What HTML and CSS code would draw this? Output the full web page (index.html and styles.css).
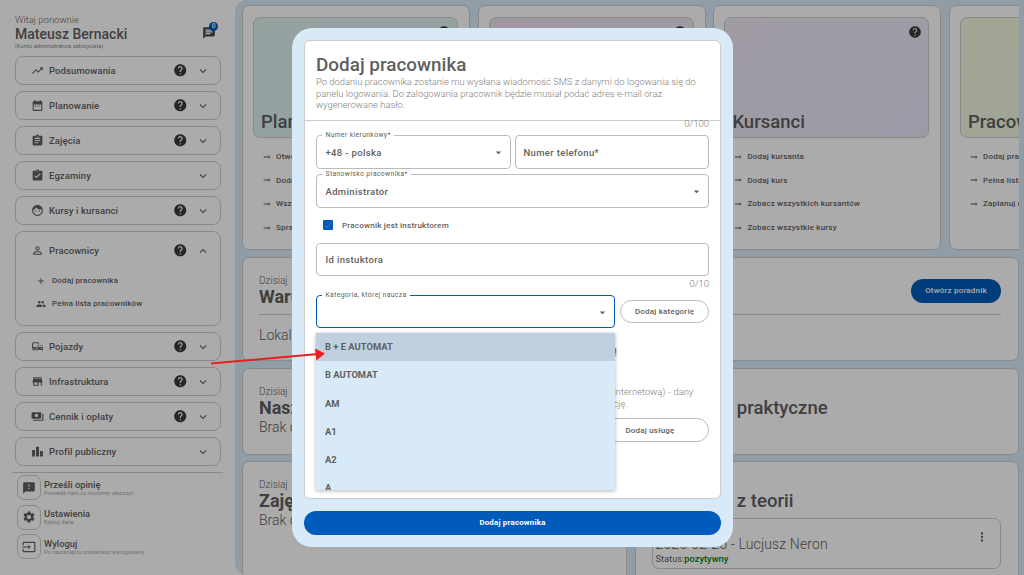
FILE: index.html
```html
<!DOCTYPE html>
<html lang="pl">
<head>
  <meta charset="UTF-8">
  <meta name="viewport" content="width=device-width, initial-scale=1.0">
  <title>Dodaj pracownika</title>
  <link rel="stylesheet" href="styles.css">
</head>
<body>
  <!-- ikony -->
  <svg class="icon-defs" aria-hidden="true">
    <symbol id="i-trend" viewBox="0 0 24 24"><path d="M16 6l2.29 2.29-4.88 4.88-4-4L2 16.59 3.41 18l6-6 4 4 6.3-6.29L22 12V6z"/></symbol>
    <symbol id="i-date" viewBox="0 0 24 24"><path d="M19 4h-1V2h-2v2H8V2H6v2H5c-1.11 0-1.99.9-1.99 2L3 20a2 2 0 0 0 2 2h14c1.1 0 2-.9 2-2V6c0-1.1-.9-2-2-2zm0 16H5V10h14v10zM9 14H7v-2h2v2zm4 0h-2v-2h2v2zm4 0h-2v-2h2v2z"/></symbol>
    <symbol id="i-assign" viewBox="0 0 24 24"><path d="M19 3h-4.18C14.4 1.84 13.3 1 12 1c-1.3 0-2.4.84-2.82 2H5c-1.1 0-2 .9-2 2v14c0 1.1.9 2 2 2h14c1.1 0 2-.9 2-2V5c0-1.1-.9-2-2-2zm-7 0c.55 0 1 .45 1 1s-.45 1-1 1-1-.45-1-1 .45-1 1-1zm2 14H7v-2h7v2zm3-4H7v-2h10v2zm0-4H7V7h10v2z"/></symbol>
    <symbol id="i-check" viewBox="0 0 24 24"><path d="M19 3h-4.18C14.4 1.84 13.3 1 12 1c-1.3 0-2.4.84-2.82 2H5c-1.1 0-2 .9-2 2v14c0 1.1.9 2 2 2h14c1.1 0 2-.9 2-2V5c0-1.1-.9-2-2-2zm-7 0c.55 0 1 .45 1 1s-.45 1-1 1-1-.45-1-1 .45-1 1-1zm-2 14l-4-4 1.41-1.41L10 14.17l6.59-6.59L18 9l-8 8z"/></symbol>
    <symbol id="i-face" viewBox="0 0 24 24"><path d="M9 11.75c-.69 0-1.25.56-1.25 1.25s.56 1.25 1.25 1.25 1.25-.56 1.25-1.25-.56-1.25-1.25-1.25zm6 0c-.69 0-1.25.56-1.25 1.25s.56 1.25 1.25 1.25 1.25-.56 1.25-1.25-.56-1.25-1.25-1.25zM12 2C6.48 2 2 6.48 2 12s4.48 10 10 10 10-4.48 10-10S17.52 2 12 2zm0 18c-4.41 0-8-3.59-8-8 0-.29.02-.58.05-.86 2.36-1.05 4.23-2.98 5.21-5.37C11.07 8.33 14.05 10 17.42 10c.78 0 1.53-.09 2.25-.26.21.71.33 1.47.33 2.26 0 4.41-3.59 8-8 8z"/></symbol>
    <symbol id="i-person" viewBox="0 0 24 24"><path d="M12 5.9c1.16 0 2.1.94 2.1 2.1s-.94 2.1-2.1 2.1S9.9 9.16 9.9 8s.94-2.1 2.1-2.1m0 9c2.97 0 6.1 1.46 6.1 2.1v1.1H5.9V17c0-.64 3.13-2.1 6.1-2.1M12 4C9.79 4 8 5.79 8 8s1.79 4 4 4 4-1.79 4-4-1.79-4-4-4zm0 9c-2.67 0-8 1.34-8 4v3h16v-3c0-2.66-5.33-4-8-4z"/></symbol>
    <symbol id="i-help" viewBox="0 0 24 24"><path d="M12 2C6.48 2 2 6.48 2 12s4.48 10 10 10 10-4.48 10-10S17.52 2 12 2zm1 17h-2v-2h2v2zm2.07-7.75l-.9.92C13.45 12.9 13 13.5 13 15h-2v-.5c0-1.1.45-2.1 1.17-2.83l1.24-1.26c.37-.36.59-.86.59-1.41 0-1.1-.9-2-2-2s-2 .9-2 2H8c0-2.21 1.79-4 4-4s4 1.79 4 4c0 .88-.36 1.68-.93 2.25z"/></symbol>
    <symbol id="i-more" viewBox="0 0 24 24"><path d="M16.59 8.59L12 13.17 7.41 8.59 6 10l6 6 6-6z"/></symbol>
    <symbol id="i-less" viewBox="0 0 24 24"><path d="M12 8l-6 6 1.41 1.41L12 10.83l4.59 4.58L18 14z"/></symbol>
    <symbol id="i-add" viewBox="0 0 24 24"><path d="M19 13h-6v6h-2v-6H5v-2h6V5h2v6h6v2z"/></symbol>
    <symbol id="i-people" viewBox="0 0 24 24"><path d="M16 11c1.66 0 2.99-1.34 2.99-3S17.66 5 16 5c-1.66 0-3 1.34-3 3s1.34 3 3 3zm-8 0c1.66 0 2.99-1.34 2.99-3S9.66 5 8 5C6.34 5 5 6.34 5 8s1.34 3 3 3zm0 2c-2.33 0-7 1.17-7 3.5V19h14v-2.5c0-2.33-4.67-3.5-7-3.5zm8 0c-.29 0-.62.02-.97.05 1.16.84 1.97 1.97 1.97 3.45V19h6v-2.5c0-2.33-4.67-3.5-7-3.5z"/></symbol>
    <symbol id="i-commute" viewBox="0 0 24 24"><path d="M12 4H5C3.34 4 2 5.34 2 7v8c0 1.66 1.34 3 3 3l-1 1v1h1l2-2.03L9 18v-5H4V5.98L13 6v2h2V7c0-1.66-1.34-3-3-3zM5 14c.55 0 1 .45 1 1s-.45 1-1 1-1-.45-1-1 .45-1 1-1zm15.57-4.34c-.14-.4-.52-.66-.97-.66h-7.19c-.46 0-.83.26-.98.66L10 13.77l.01 5.51c0 .38.31.72.69.72h.62c.38 0 .68-.38.68-.76V18h8v1.24c0 .38.31.76.69.76h.61c.38 0 .69-.34.69-.72l.01-1.37v-4.14l-1.43-4.11zm-8.16.34h7.19l1.03 3h-9.25l1.03-3zM12 16c-.55 0-1-.45-1-1s.45-1 1-1 1 .45 1 1-.45 1-1 1zm8 0c-.55 0-1-.45-1-1s.45-1 1-1 1 .45 1 1-.45 1-1 1z"/></symbol>
    <symbol id="i-store" viewBox="0 0 24 24"><path d="M20 4H4v2h16V4zm1 10v-2l-1-5H4l-1 5v2h1v6h10v-6h4v6h2v-6h1zm-9 4H6v-4h6v4z"/></symbol>
    <symbol id="i-pay" viewBox="0 0 24 24"><path d="M19 14V6c0-1.1-.9-2-2-2H3c-1.1 0-2 .9-2 2v8c0 1.1.9 2 2 2h14c1.1 0 2-.9 2-2zm-9-1c-1.66 0-3-1.34-3-3s1.34-3 3-3 3 1.34 3 3-1.34 3-3 3zm13-6v11c0 1.1-.9 2-2 2H4v-2h17V7h2z"/></symbol>
    <symbol id="i-bars" viewBox="0 0 24 24"><path d="M7.5 21H2V9h5.5v12zm7.25-18h-5.5v18h5.5V3zM22 11h-5.5v10H22V11z"/></symbol>
    <symbol id="i-feedback" viewBox="0 0 24 24"><path d="M20 2H4c-1.1 0-1.99.9-1.99 2L2 22l4-4h14c1.1 0 2-.9 2-2V4c0-1.1-.9-2-2-2zm-7 12h-2v-2h2v2zm0-4h-2V6h2v4z"/></symbol>
    <symbol id="i-settings" viewBox="0 0 24 24"><path d="M19.14 12.94c.04-.3.06-.61.06-.94 0-.32-.02-.64-.07-.94l2.03-1.58c.18-.14.23-.41.12-.61l-1.92-3.32c-.12-.22-.37-.29-.59-.22l-2.39.96c-.5-.38-1.03-.7-1.62-.94l-.36-2.54c-.04-.24-.24-.41-.48-.41h-3.84c-.24 0-.43.17-.47.41l-.36 2.54c-.59.24-1.13.57-1.62.94l-2.39-.96c-.22-.08-.47 0-.59.22L2.74 8.87c-.12.21-.08.47.12.61l2.03 1.58c-.05.3-.09.63-.09.94s.02.64.07.94l-2.03 1.58c-.18.14-.23.41-.12.61l1.92 3.32c.12.22.37.29.59.22l2.39-.96c.5.38 1.03.7 1.62.94l.36 2.54c.05.24.24.41.48.41h3.84c.24 0 .44-.17.47-.41l.36-2.54c.59-.24 1.13-.56 1.62-.94l2.39.96c.22.08.47 0 .59-.22l1.92-3.32c.12-.22.07-.47-.12-.61l-2.01-1.58zM12 15.6c-1.98 0-3.6-1.62-3.6-3.6s1.62-3.6 3.6-3.6 3.6 1.62 3.6 3.6-1.62 3.6-3.6 3.6z"/></symbol>
    <symbol id="i-input" viewBox="0 0 24 24"><path d="M21 3.01H3c-1.1 0-2 .9-2 2V9h2V4.99h18v14.03H3V15H1v4.01c0 1.1.9 1.98 2 1.98h18c1.1 0 2-.88 2-1.98v-14c0-1.11-.9-2-2-2zM11 16l4-4-4-4v3H1v2h10v3z"/></symbol>
    <symbol id="i-chat" viewBox="0 0 24 24"><path d="M20 2H4c-1.1 0-2 .9-2 2v18l4-4h14c1.1 0 2-.9 2-2V4c0-1.1-.9-2-2-2zM6 9h12v2H6V9zm8 5H6v-2h8v2zm4-6H6V6h12v2z"/></symbol>
    <symbol id="i-arrow" viewBox="0 0 24 24"><path d="M16.01 11H4v2h12.01v3L20 12l-3.99-4z"/></symbol>
    <symbol id="i-dots" viewBox="0 0 24 24"><path d="M12 8c1.1 0 2-.9 2-2s-.9-2-2-2-2 .9-2 2 .9 2 2 2zm0 2c-1.1 0-2 .9-2 2s.9 2 2 2 2-.9 2-2-.9-2-2-2zm0 6c-1.1 0-2 .9-2 2s.9 2 2 2 2-.9 2-2-.9-2-2-2z"/></symbol>
    <symbol id="i-drop" viewBox="0 0 24 24"><path d="M7 10l5 5 5-5z"/></symbol>
    <symbol id="i-tick" viewBox="0 0 24 24"><path d="M9 16.17L4.83 12l-1.42 1.41L9 19 21 7l-1.41-1.41z"/></symbol>
  </svg>

  <div class="layout">
    <!-- menu boczne -->
    <aside class="sidebar">
      <div class="user">
        <div>
          <div class="user-hello">Witaj ponownie</div>
          <div class="user-name">Mateusz Bernacki</div>
          <div class="user-role">(Konto administratora założyciela)</div>
        </div>
        <div class="user-chat">
          <svg class="icon-chat"><use href="#i-chat"/></svg>
          <span class="badge">0</span>
        </div>
      </div>

      <nav class="nav">
        <div class="nav-item"><svg class="nav-icon"><use href="#i-trend"/></svg><span class="nav-label">Podsumowania</span><svg class="nav-help"><use href="#i-help"/></svg><svg class="nav-chevron"><use href="#i-more"/></svg></div>
        <div class="nav-item"><svg class="nav-icon"><use href="#i-date"/></svg><span class="nav-label">Planowanie</span><svg class="nav-help"><use href="#i-help"/></svg><svg class="nav-chevron"><use href="#i-more"/></svg></div>
        <div class="nav-item"><svg class="nav-icon"><use href="#i-assign"/></svg><span class="nav-label">Zajęcia</span><svg class="nav-help"><use href="#i-help"/></svg><svg class="nav-chevron"><use href="#i-more"/></svg></div>
        <div class="nav-item"><svg class="nav-icon"><use href="#i-check"/></svg><span class="nav-label">Egzaminy</span><svg class="nav-chevron"><use href="#i-more"/></svg></div>
        <div class="nav-item"><svg class="nav-icon"><use href="#i-face"/></svg><span class="nav-label">Kursy i kursanci</span><svg class="nav-help"><use href="#i-help"/></svg><svg class="nav-chevron"><use href="#i-more"/></svg></div>
        <div class="nav-group">
          <div class="nav-group-head"><svg class="nav-icon"><use href="#i-person"/></svg><span class="nav-label">Pracownicy</span><svg class="nav-help"><use href="#i-help"/></svg><svg class="nav-chevron"><use href="#i-less"/></svg></div>
          <div class="nav-sub"><svg class="nav-sub-icon"><use href="#i-add"/></svg>Dodaj pracownika</div>
          <div class="nav-sub"><svg class="nav-sub-icon"><use href="#i-people"/></svg>Pełna lista pracowników</div>
        </div>
        <div class="nav-item"><svg class="nav-icon"><use href="#i-commute"/></svg><span class="nav-label">Pojazdy</span><svg class="nav-help"><use href="#i-help"/></svg><svg class="nav-chevron"><use href="#i-more"/></svg></div>
        <div class="nav-item"><svg class="nav-icon"><use href="#i-store"/></svg><span class="nav-label">Infrastruktura</span><svg class="nav-help"><use href="#i-help"/></svg><svg class="nav-chevron"><use href="#i-more"/></svg></div>
        <div class="nav-item"><svg class="nav-icon"><use href="#i-pay"/></svg><span class="nav-label">Cennik i opłaty</span><svg class="nav-help"><use href="#i-help"/></svg><svg class="nav-chevron"><use href="#i-more"/></svg></div>
        <div class="nav-item"><svg class="nav-icon"><use href="#i-bars"/></svg><span class="nav-label">Profil publiczny</span><svg class="nav-chevron"><use href="#i-more"/></svg></div>
      </nav>

      <div class="side-footer">
        <div class="foot-item">
          <div class="foot-icon"><svg><use href="#i-feedback"/></svg></div>
          <div><div class="foot-title">Prześli opinię</div><div class="foot-sub">Powiedź nam co możemy ulepszyć</div></div>
        </div>
        <div class="foot-item">
          <div class="foot-icon"><svg><use href="#i-settings"/></svg></div>
          <div><div class="foot-title">Ustawienia</div><div class="foot-sub">Edytuj dane</div></div>
        </div>
        <div class="foot-item">
          <div class="foot-icon"><svg><use href="#i-input"/></svg></div>
          <div><div class="foot-title">Wyloguj</div><div class="foot-sub">Po naciśnięciu zostaniesz wylogowany</div></div>
        </div>
      </div>
    </aside>

    <!-- panel -->
    <main class="main">
      <div class="tiles">
        <section class="tile">
          <div class="tile-head head-green"><svg class="tile-help"><use href="#i-help"/></svg><h2>Planowanie</h2></div>
          <ul class="tile-links">
            <li><svg><use href="#i-arrow"/></svg>Otwórz kalendarz</li>
            <li><svg><use href="#i-arrow"/></svg>Dodaj wydarzenie</li>
            <li><svg><use href="#i-arrow"/></svg>Wszystkie wydarzenia</li>
            <li><svg><use href="#i-arrow"/></svg>Sprawdź dostępność</li>
          </ul>
        </section>
        <section class="tile">
          <div class="tile-head head-pink"><svg class="tile-help"><use href="#i-help"/></svg><h2>Zajęcia</h2></div>
          <ul class="tile-links">
            <li><svg><use href="#i-arrow"/></svg>Dodaj zajęcia</li>
            <li><svg><use href="#i-arrow"/></svg>Lista zajęć</li>
          </ul>
        </section>
        <section class="tile">
          <div class="tile-head head-violet"><svg class="tile-help"><use href="#i-help"/></svg><h2>Kursanci</h2></div>
          <ul class="tile-links">
            <li><svg><use href="#i-arrow"/></svg>Dodaj kursanta</li>
            <li><svg><use href="#i-arrow"/></svg>Dodaj kurs</li>
            <li><svg><use href="#i-arrow"/></svg>Zobacz wszystkich kursantów</li>
            <li><svg><use href="#i-arrow"/></svg>Zobacz wszystkie kursy</li>
          </ul>
        </section>
        <section class="tile">
          <div class="tile-head head-lime"><h2>Pracownicy</h2></div>
          <ul class="tile-links">
            <li><svg><use href="#i-arrow"/></svg>Dodaj pracownika</li>
            <li><svg><use href="#i-arrow"/></svg>Pełna lista pracowników</li>
            <li><svg><use href="#i-arrow"/></svg>Zaplanuj urlop</li>
          </ul>
        </section>
      </div>

      <section class="card card-wide">
        <div class="card-top">
          <div>
            <div class="card-day">Dzisiaj</div>
            <div class="card-title">Warunki pogodowe</div>
          </div>
          <div class="guide-btn">Otwórz poradnik</div>
        </div>
        <div class="card-line"></div>
        <div class="card-text">Lokalizacja</div>
      </section>

      <div class="cards">
        <section class="card card-short">
          <div class="card-day">Dzisiaj</div>
          <div class="card-title">Nasze zajęcia</div>
          <div class="card-text">Brak danych</div>
        </section>
        <section class="card card-short">
          <div class="card-day">&nbsp;</div>
          <div class="card-title title-medium">Egzaminy praktyczne</div>
        </section>
        <section class="card card-tall">
          <div class="card-day">Dzisiaj</div>
          <div class="card-title">Zajęcia</div>
          <div class="card-text">Brak danych</div>
        </section>
        <section class="card card-tall">
          <div class="card-day">&nbsp;</div>
          <div class="card-title title-medium">Egzaminy z teorii</div>
          <div class="exam">
            <div class="exam-name">2025-02-25 - Lucjusz Neron</div>
            <div class="exam-status">Status:<span class="ok">pozytywny</span></div>
            <svg class="exam-menu"><use href="#i-dots"/></svg>
          </div>
        </section>
      </div>
    </main>
  </div>

  <!-- okno dodawania -->
  <div class="overlay">
    <div class="modal">
      <div class="sheet">
        <div class="sheet-head">
          <h1>Dodaj pracownika</h1>
          <p>Po dodaniu pracownika zostanie mu wysłana wiadomość SMS z danymi do logowania się do panelu logowania. Do zalogowania pracownik będzie musiał podać adres e-mail oraz wygenerowane hasło.</p>
        </div>
        <div class="sheet-body">
          <div class="counter counter-first">0/100</div>
          <div class="row-phone">
            <div class="field">
              <span class="field-label">Numer kierunkowy*</span>
              <span class="field-value">+48 - polska</span>
              <svg class="field-drop"><use href="#i-drop"/></svg>
            </div>
            <div class="field field-plain"><span class="field-value">Numer telefonu*</span></div>
          </div>
          <div class="field field-job">
            <span class="field-label">Stanowisko pracownika*</span>
            <span class="field-value">Administrator</span>
            <svg class="field-drop"><use href="#i-drop"/></svg>
          </div>
          <div class="check-row"><span class="check"><svg><use href="#i-tick"/></svg></span>Pracownik jest instruktorem</div>
          <div class="field field-id"><span class="field-value">Id instuktora</span></div>
          <div class="counter counter-second">0/10</div>

          <div class="category">
            <div class="field field-focus">
              <span class="field-label">Kategoria, której naucza</span>
              <svg class="field-drop"><use href="#i-drop"/></svg>
            </div>
            <div class="pill pill-cat">Dodaj kategorię</div>
            <ul class="dropdown">
              <li class="active">B + E AUTOMAT</li>
              <li>B AUTOMAT</li>
              <li>AM</li>
              <li>A1</li>
              <li>A2</li>
              <li>A</li>
            </ul>
          </div>

          <div class="warning">Instruktor musi mieć przypisaną co najmniej jedną kategorię!</div>
          <p class="service-text">Wybierz usługi, które ten pracownik będzie mógł sprzedawać (sprzedaż internetową) - dany<br>pracownik będzie mógł wykonywać w systemie tylko wybraną tutaj funkcję.</p>
          <div class="service-row"><div class="pill pill-service">Dodaj usługę</div></div>
        </div>
      </div>
      <div class="submit">Dodaj pracownika</div>
    </div>
  </div>

  <!-- czerwona strzałka -->
  <svg class="red-arrow" viewBox="0 0 130 24">
    <path d="M1 16.5L108 7" stroke="#e8201f" stroke-width="2" fill="none"/>
    <path d="M115 6.4L105 1.5l1.4 12z" fill="#e8201f"/>
  </svg>
</body>
</html>
```

FILE: styles.css
```css
* {
  box-sizing: border-box;
}

html,
body {
  height: 100%;
}

body {
  margin: 0;
  overflow: hidden;
  background-color: #fff;
  color: #5f5f5f;
  font-family: Roboto, "Liberation Sans", sans-serif;
}

.icon-defs {
  display: none;
}

svg {
  fill: currentColor;
  flex: none;
}

ul {
  margin: 0;
  padding: 0;
  list-style: none;
}

.layout {
  display: flex;
  height: 575px;
}

/* menu boczne */
.sidebar {
  width: 235px;
  flex: none;
  padding: 0 14px 0 15px;
}

.user {
  display: flex;
  justify-content: space-between;
  height: 56px;
  padding: 14px 6px 0 0;
}

.user-hello {
  font-size: 9.5px;
  font-weight: 300;
  line-height: 12px;
}

.user-name {
  font-size: 14px;
  font-weight: 500;
  line-height: 16px;
}

.user-role {
  color: #888;
  font-size: 5.8px;
  line-height: 8px;
}

.user-chat {
  position: relative;
  width: 13px;
  height: 13px;
  margin-top: 12px;
  color: #4a4a4a;
}

.icon-chat {
  display: block;
  width: 14px;
  height: 14px;
}

.badge {
  position: absolute;
  top: -4px;
  right: -3px;
  width: 9px;
  height: 9px;
  border-radius: 50%;
  background-color: #005bbb;
  color: #fff;
  font-size: 6.5px;
  font-weight: 500;
  line-height: 9px;
  text-align: center;
}

.nav {
  display: flex;
  flex-direction: column;
  gap: 6px;
}

.nav-item,
.nav-group {
  border: 1px solid #ccc;
  border-radius: 8px;
}

.nav-item {
  display: flex;
  align-items: center;
  height: 29px;
  padding-left: 15px;
}

.nav-group {
  height: 95px;
}

.nav-group-head {
  display: flex;
  align-items: center;
  height: 37px;
  padding-left: 15px;
}

.nav-icon {
  width: 13px;
  height: 13px;
  margin-right: 5px;
}

.nav-label {
  flex: 1;
  font-size: 9.5px;
  font-weight: 500;
  letter-spacing: .1px;
}

.nav-help {
  width: 14.5px;
  height: 14.5px;
  margin-right: 8.75px;
  color: #3a3a3a;
}

.nav-chevron {
  width: 14px;
  height: 14px;
  margin-right: 10px;
}

.nav-sub {
  display: flex;
  align-items: center;
  height: 23.3px;
  padding-left: 20px;
  font-size: 8px;
  font-weight: 500;
  letter-spacing: .15px;
}

.nav-sub-icon {
  width: 10px;
  height: 10px;
  margin-right: 6px;
}

.side-footer {
  display: flex;
  flex-direction: column;
  gap: 4.5px;
  margin: 5.5px -2px 0 -3px;
  padding: 2.5px 0 0 5px;
  border-top: 1px solid #ccc;
}

.foot-item {
  display: flex;
  align-items: center;
  gap: 3px;
  height: 25px;
}

.foot-icon {
  display: flex;
  align-items: center;
  justify-content: center;
  width: 24px;
  height: 25px;
  border: 1px solid #ccc;
  border-radius: 7px;
}

.foot-icon svg {
  width: 14px;
  height: 14px;
}

.foot-title {
  font-size: 9.4px;
  font-weight: 500;
  line-height: 11px;
}

.foot-sub {
  color: #aaa;
  font-size: 5.8px;
  line-height: 7px;
}

/* panel */
.main {
  width: 789px;
  flex: none;
  height: 575px;
  padding: 5px 5px 0 7px;
  overflow: hidden;
  border-radius: 12px 0 0 12px;
  background-color: #d8eaf8;
}

.tiles {
  display: flex;
  gap: 7.7px;
  overflow: hidden;
  border-radius: 6px 0 0 6px;
}

.tile {
  width: 228px;
  height: 245px;
  flex: none;
  padding: 11px 11px 0 10px;
  border: 1px solid #ccc;
  border-radius: 7px;
  background-color: #fff;
}

.tile-head {
  position: relative;
  display: flex;
  align-items: flex-end;
  height: 121px;
  padding: 0 7px 4px;
  border: 1px solid #ccc;
  border-radius: 7px;
}

.tile-head h2 {
  margin: 0;
  font-size: 18.5px;
  font-weight: 500;
  line-height: 22px;
  white-space: nowrap;
}

.tile-help {
  position: absolute;
  top: 7px;
  right: 6px;
  width: 14px;
  height: 14px;
  color: #3a3a3a;
}

.head-green {
  background: linear-gradient(135deg, #dcf0ee, #e0f0f2);
}

.head-pink {
  background: linear-gradient(135deg, #f0e2f2, #ece8f6);
}

.head-violet {
  background: linear-gradient(135deg, #f0e8f4, #e8e8fa);
}

.head-lime {
  background: linear-gradient(135deg, #f0f6dc, #eef8e4);
}

.tile-links {
  margin-top: 7px;
  padding-left: 9px;
}

.tile-links li {
  display: flex;
  align-items: center;
  gap: 4px;
  height: 23.6px;
  font-size: 8px;
  font-weight: 500;
  letter-spacing: .2px;
  white-space: nowrap;
}

.tile-links svg {
  width: 10px;
  height: 10px;
}

.card {
  padding: 17px 17px 0 16px;
  border: 1px solid #ccc;
  border-radius: 7px;
  background-color: #fff;
}

.card-wide {
  width: 777px;
  height: 104px;
  margin-top: 7px;
}

.card-top {
  display: flex;
  align-items: center;
  justify-content: space-between;
}

.card-day {
  font-size: 10px;
  font-weight: 300;
  line-height: 12px;
}

.card-title {
  font-size: 18px;
  font-weight: 700;
  line-height: 20px;
  white-space: nowrap;
}

.title-medium {
  font-size: 18.6px;
  font-weight: 500;
}

.card-line {
  margin-top: 7px;
  border-top: 1px solid #ccc;
}

.card-text {
  font-size: 14px;
  font-weight: 300;
  line-height: 18px;
  white-space: nowrap;
}

.card-wide .card-text {
  margin-top: 11px;
}

.guide-btn {
  width: 90px;
  height: 24px;
  border-radius: 12px;
  background-color: #005bbb;
  color: #fff;
  font-size: 8px;
  font-weight: 500;
  letter-spacing: .2px;
  line-height: 24px;
  text-align: center;
}

.cards {
  display: grid;
  grid-template-columns: 384.5px 384.5px;
  gap: 6px 8px;
  margin-top: 7px;
}

.card-short {
  height: 87px;
}

.card-tall {
  height: 130px;
}

.exam {
  position: relative;
  height: 51px;
  margin-top: 7px;
  padding: 16px 3px 0;
  border: 1px solid #ccc;
  border-radius: 7px;
}

.exam-name {
  font-size: 14px;
  font-weight: 300;
  letter-spacing: .15px;
  line-height: 18px;
}

.exam-status {
  font-size: 9.3px;
  line-height: 11px;
}

.ok {
  color: green;
  font-weight: 500;
}

.exam-menu {
  position: absolute;
  top: 11px;
  right: 11px;
  width: 14px;
  height: 14px;
}

/* okno */
.overlay {
  position: fixed;
  inset: 0;
  display: flex;
  align-items: center;
  justify-content: center;
  padding-left: 1px;
  background-color: rgba(0, 0, 0, .33);
}

.modal {
  display: flex;
  flex-direction: column;
  width: 441px;
  height: 519px;
  padding: 12px;
  border-radius: 20px;
  background-color: #d8eaf8;
}

.sheet {
  height: 459px;
  flex: none;
  overflow: hidden;
  border: 1px solid #ccc;
  border-radius: 6px;
  background-color: #fff;
}

.sheet-head {
  height: 80px;
  padding: 12px 11px 0;
  border-bottom: 1px solid #ccc;
}

.sheet-head h1 {
  margin: 0;
  font-size: 18.9px;
  font-weight: 500;
  line-height: 23px;
}

.sheet-head p {
  margin: 0;
  color: #808080;
  font-size: 9.4px;
  font-weight: 300;
  line-height: 11.5px;
}

.sheet-body {
  padding: 0 11px;
}

.counter {
  color: #808080;
  font-size: 9.5px;
  font-weight: 300;
  line-height: 10px;
  text-align: right;
}

.counter-first {
  height: 16px;
  margin-top: -2px;
}

.counter-second {
  margin-top: 3px;
}

.row-phone {
  display: flex;
  gap: 3.5px;
}

.field {
  position: relative;
  display: flex;
  align-items: center;
  flex: 1;
  height: 34px;
  padding-left: 8.5px;
  border: 1px solid #bbb;
  border-radius: 4px;
  background-color: #fff;
}

.field-label {
  position: absolute;
  top: -4px;
  left: 5px;
  padding: 0 3.5px;
  background-color: #fff;
  font-size: 6.8px;
  letter-spacing: .35px;
  line-height: 7px;
  white-space: nowrap;
}

.field-value {
  font-size: 9.5px;
  font-weight: 500;
  letter-spacing: .35px;
}

.field-plain {
  padding-left: 8px;
}

.field-drop {
  position: absolute;
  top: 10px;
  right: 5px;
  width: 13px;
  height: 13px;
}

.field-job {
  margin-top: 5px;
}

.check-row {
  display: flex;
  align-items: center;
  height: 35px;
  padding: 0 0 1px 7px;
  font-size: 8.1px;
  font-weight: 500;
  letter-spacing: .2px;
}

.check {
  display: flex;
  width: 10px;
  height: 10px;
  margin-right: 9px;
  border-radius: 1px;
  background-color: #005bbb;
  color: #4a6f9c;
}

.check svg {
  width: 10px;
  height: 10px;
}

.field-id {
  height: 33px;
}

.category {
  position: relative;
  display: flex;
  align-items: center;
  gap: 5px;
  margin-top: 6px;
}

.field-focus {
  flex: none;
  width: 299px;
  height: 33px;
  border: 1px solid #005bbb;
}

.pill {
  display: flex;
  align-items: center;
  justify-content: center;
  height: 23px;
  border: 1px solid #bbb;
  border-radius: 12px;
  background-color: #fff;
  font-size: 8px;
  font-weight: 500;
  letter-spacing: .2px;
}

.pill-cat {
  width: 89px;
}

.dropdown {
  position: absolute;
  z-index: 2;
  top: 38px;
  left: 0;
  width: 299px;
  height: 157px;
  overflow: hidden;
  background-color: #d8eaf8;
  box-shadow: 0 1px 4px rgba(0, 0, 0, .3);
}

.dropdown li {
  height: 28.3px;
  padding-left: 9px;
  font-size: 9.4px;
  font-weight: 700;
  line-height: 28.3px;
}

.dropdown .active {
  background-color: #c0d0df;
}

.warning {
  margin-top: 18px;
  width: 301px;
  color: #e8201f;
  font-size: 11px;
  line-height: 14px;
  text-align: right;
  white-space: nowrap;
}

.service-text {
  margin: 26px 0 0;
  color: #808080;
  font-size: 9.4px;
  font-weight: 300;
  line-height: 11.5px;
  word-spacing: .45px;
  white-space: nowrap;
}

.service-row {
  display: flex;
  justify-content: flex-end;
  margin-top: 9px;
}

.pill-service {
  width: 118px;
  height: 24px;
}

.submit {
  height: 24px;
  margin-top: 12px;
  border-radius: 12px;
  background-color: #005bbb;
  color: #fff;
  font-size: 7.9px;
  font-weight: 700;
  letter-spacing: .2px;
  line-height: 24px;
  text-align: center;
}

.red-arrow {
  position: fixed;
  top: 347px;
  left: 210px;
  width: 130px;
  height: 24px;
}
```
